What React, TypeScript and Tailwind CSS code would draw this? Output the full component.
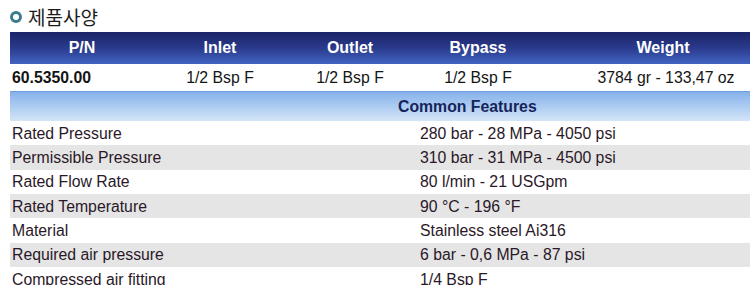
import React from "react";

const font = { fontFamily: '"Liberation Sans", Arial, sans-serif' };

const specs: [string, string][] = [
  ["Rated Pressure", "280 bar - 28 MPa - 4050 psi"],
  ["Permissible Pressure", "310 bar - 31 MPa - 4500 psi"],
  ["Rated Flow Rate", "80 l/min - 21 USGpm"],
  ["Rated Temperature", "90 °C - 196 °F"],
  ["Material", "Stainless steel Ai316"],
  ["Required air pressure", "6 bar - 0,6 MPa - 87 psi"],
  ["Compressed air fitting", "1/4 Bsp F"],
];

export default function App() {
  return (
    <div className="w-[750px] h-[285px] overflow-hidden bg-white" style={font}>
      <div className="h-[32px] flex items-center pl-[10px] gap-[6px]">
        <span className="w-[12px] h-[12px] rounded-full border-[3px] border-[#3b7c8c] mt-[1px]" />
        <span
          className="text-[19px] leading-none text-[#1c1c1c]"
          style={{ fontFamily: '"Noto Sans CJK KR", "Noto Sans", sans-serif' }}
        >
          제품사양
        </span>
      </div>
      <div className="ml-[10px] w-[780px]">
        <div className="h-[32px] grid grid-cols-[144px_132px_128px_128px_1fr] items-center bg-gradient-to-b from-[#1b2468] via-[#2a3a8c] to-[#4264c2] text-white font-bold text-[16px]">
          <div className="text-center">P/N</div>
          <div className="text-center">Inlet</div>
          <div className="text-center">Outlet</div>
          <div className="text-center">Bypass</div>
          <div className="text-center pr-[6px]">Weight</div>
        </div>
        <div className="h-[27px] grid grid-cols-[144px_132px_128px_128px_1fr] items-center text-[15.8px] text-[#141414]">
          <div className="pl-[2px] font-bold">60.5350.00</div>
          <div className="text-center">1/2 Bsp F</div>
          <div className="text-center">1/2 Bsp F</div>
          <div className="text-center">1/2 Bsp F</div>
          <div className="text-center">3784 gr - 133,47 oz</div>
        </div>
        <div className="h-[30px] flex items-center bg-gradient-to-b from-[#86b2ea] to-[#d4e5f7] border-t border-[#6f9ee0]">
          <div className="pl-[388px] font-bold text-[15.8px] text-[#15245a]">Common Features</div>
        </div>
        {specs.map(([k, v], i) => (
          <div
            key={k}
            className={`h-[24.33px] flex items-center pt-[1px] text-[15.8px] text-[#2a1828] ${i % 2 === 1 ? "bg-[#e5e5e5]" : "bg-white"}`}
          >
            <div className="w-[408px] pl-[2px]">{k}</div>
            <div className="pl-[2px]">{v}</div>
          </div>
        ))}
      </div>
    </div>
  );
}
